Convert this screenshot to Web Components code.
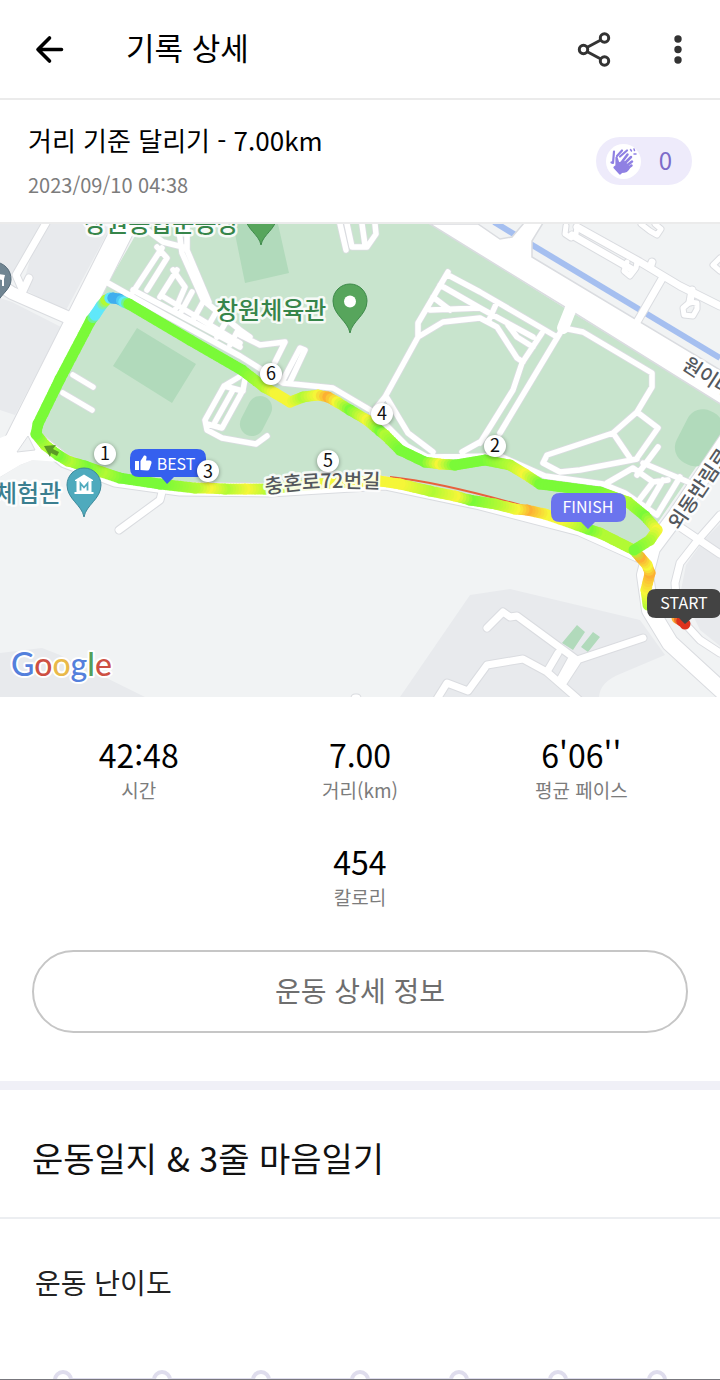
<!DOCTYPE html>
<html lang="ko">
<head>
<meta charset="utf-8">
<meta name="viewport" content="width=device-width, initial-scale=1">
<title>기록 상세</title>
<style>
  body {
    margin: 0;
    background: #fff;
    color: #111;
    font-family: "Noto Sans CJK KR", "Noto Sans", sans-serif;
  }
</style>
</head>
<body>

<record-page>
  <record-header slot="header">기록 상세</record-header>
  <record-info date="2023/09/10 04:38" claps="0">거리 기준 달리기 - 7.00km</record-info>
  <route-map></route-map>
  <record-stats>
    <stat-item value="42:48">시간</stat-item>
    <stat-item value="7.00">거리(km)</stat-item>
    <stat-item value="6'06''">평균 페이스</stat-item>
    <stat-item value="454">칼로리</stat-item>
  </record-stats>
  <detail-button>운동 상세 정보</detail-button>
  <diary-section heading="운동일지 &amp; 3줄 마음일기">
    <level-picker label="운동 난이도" steps="7"></level-picker>
  </diary-section>
</record-page>

<script>
//============= PAGE =========================//
const RecordPage = document.createElement('template');
RecordPage.innerHTML = `
<style>
  :host { display: block; }
  main { display: flex; flex-direction: column; }
</style>
<slot name="header"></slot>
<main><slot></slot></main>
`;

class recordpage extends HTMLElement {
  constructor() {
    super();
    this.attachShadow({ mode: 'open' });
    this.shadowRoot.appendChild(RecordPage.content.cloneNode(true));
  }
}
window.customElements.define('record-page', recordpage);


//============= HEADER =========================//
const RecordHeader = document.createElement('template');
RecordHeader.innerHTML = `
<style>
  :host { display: block; border-bottom: 2px solid #ebebeb; }
  header {
    display: flex;
    align-items: center;
    height: 98px;
    padding: 0 20px;
  }
  h1 {
    flex: 1;
    margin: 0 0 4px 50px;
    font-size: 31px;
    line-height: 48px;
    font-weight: 400;
    color: #000;
  }
  button {
    width: 56px;
    height: 56px;
    padding: 0;
    border: 0;
    background: none;
  }
  .share { margin-right: 22px; }
  svg { display: block; }
</style>
<header>
  <button type="button" aria-label="뒤로">
    <svg width="56" height="56" viewBox="0 0 56 56" fill="none" stroke="#000" stroke-width="3.6" stroke-linecap="round" stroke-linejoin="round"><path d="M41.500 28.500H18M29.500 17L18 28.500 29.500 40"/></svg>
  </button>
  <h1><slot></slot></h1>
  <button class="share" type="button" aria-label="공유">
    <svg width="56" height="56" viewBox="0 0 56 56" fill="none" stroke="#333" stroke-width="3"><circle cx="17.500" cy="28.500" r="4.200"/><circle cx="38.500" cy="17" r="4.200"/><circle cx="38.500" cy="40" r="4.200"/><path d="M21.300 26.300L34.800 19M21.300 30.700L34.800 38"/></svg>
  </button>
  <button class="more" type="button" aria-label="더보기">
    <svg width="56" height="56" viewBox="0 0 56 56" fill="#333"><circle cx="34" cy="18" r="3.700"/><circle cx="34" cy="28.500" r="3.700"/><circle cx="34" cy="39" r="3.700"/></svg>
  </button>
</header>
`;

class recordheader extends HTMLElement {
  constructor() {
    super();
    this.attachShadow({ mode: 'open' });
    this.shadowRoot.appendChild(RecordHeader.content.cloneNode(true));
  }
}
window.customElements.define('record-header', recordheader);


//============= RECORD INFO + CLAP =========================//
const RecordInfo = document.createElement('template');
RecordInfo.innerHTML = `
<style>
  :host {
    display: flex;
    align-items: center;
    justify-content: space-between;
    padding: 18px 28px 22px;
    border-bottom: 2px solid #ebebeb;
  }
  h2 {
    margin: 0;
    font-size: 26px;
    line-height: 44px;
    font-weight: 400;
    color: #000;
  }
  time {
    display: block;
    margin-top: 8px;
    font-size: 20px;
    line-height: 30px;
    color: #7c7c7c;
  }
  button {
    display: flex;
    align-items: center;
    gap: 18px;
    height: 48px;
    margin-top: 4px;
    padding: 0 20px 0 10px;
    border: 0;
    border-radius: 24px;
    background: #eeebfb;
    color: #7c6bc9;
    font: inherit;
    font-size: 24px;
    line-height: 36px;
  }
  span { padding-bottom: 3px; }
</style>
<div>
  <h2><slot></slot></h2>
  <time></time>
</div>
<button type="button" aria-label="박수">
  <svg width="35" height="35" viewBox="0 0 35 35">
    <circle cx="17.500" cy="17.500" r="17.500" fill="#fff"/>
    <g stroke="#8f80e3" stroke-width="2.200" stroke-linecap="round" stroke-linejoin="round" fill="#8f80e3">
      <path d="M8 7.500L7 19L5.500 18.500M11 12L16 6.500M14 12.500L21 6.500" fill="none"/>
      <path d="M10.500 13.500V22L8.500 23.500L14 29.500L15.500 28C20 28 22 26 23 23.500L18 18L12.500 19.500Z"/>
      <path d="M14 20.500L21.500 10.500M16.500 21.500L25 13M19 23L26 17.500M20 25.500L25.500 21.500" fill="none" stroke-width="2.500"/>
      <path d="M24.500 5.500L25.500 7M28 5L28.500 6.500M28 10L30 10" stroke-width="1.500"/>
    </g>
  </svg>
  <span></span>
</button>
`;

class recordinfo extends HTMLElement {
  constructor() {
    super();
    this.attachShadow({ mode: 'open' });
    this.shadowRoot.appendChild(RecordInfo.content.cloneNode(true));
    this.shadowRoot.querySelector('time').innerText = this.getAttribute('date');
    this.shadowRoot.querySelector('span').innerText = this.getAttribute('claps');
  }
}
window.customElements.define('record-info', recordinfo);


//============= ROUTE MAP =========================//
const RouteMap = document.createElement('template');
RouteMap.innerHTML = `
<style>
  :host { display: block; }
  svg { display: block; width: 100%; height: auto; }
  .case { fill: none; stroke: #dadce0; stroke-linejoin: round; stroke-linecap: round; }
  .road { fill: none; stroke: #fff; stroke-linejoin: round; stroke-linecap: round; }
  .block { fill: #e8eaed; }
  .field { fill: #b1dabb; }
  .label {
    font-size: 24px;
    font-weight: 500;
    paint-order: stroke;
    stroke: #fff;
    stroke-opacity: .85;
    stroke-width: 5px;
    stroke-linejoin: round;
  }
  .place { fill: #36854a; }
  .museum { fill: #3b7f90; }
  .street { fill: #54585d; font-size: 20px; }
  .km circle { fill: #fff; filter: drop-shadow(0 1px 2px rgba(0, 0, 0, .4)); }
  .km text { font-size: 18px; text-anchor: middle; fill: #111; }
  .tag { font-size: 16px; fill: #fff; text-anchor: middle; }
  .google {
    font: 500 32px Lato, sans-serif;
    paint-order: stroke;
    stroke: #fff;
    stroke-width: 4px;
    stroke-linejoin: round;
  }
</style>
<svg viewBox="0 224 720 473" role="img" aria-label="달리기 경로 지도">
  <defs>
    <path id="r-west" d="M130 215L14 445"/>
    <path id="r-south" d="M36 438L65 461L115 480L180 489L270 490L385 483L480 503L580 529L640 556"/>
    <path id="r-east" d="M735 428L676 516L652 548L645 575L650 610L670 643L730 698"/>
    <path id="r-town" d="M46 223L16 275L23 291L29 278M577 227L640 262L680 286L720 306M572 235L633 270M663 277L637 322M692 290L690 302M652 262L650 268
      M680 527L720 554M720 515L698 540L680 563L675 583L677 610L688 627L700 640L720 653
      M487 628L503 612L510 617L517 616L577 660L643 638M437 699L447 683L468 691L487 665L523 659L547 672L579 700M558 653L548 670M578 660L563 683M571 660L560 680
      M163 488L160 500L119 530M355 698L357 698"/>
    <path id="r-ring" d="M566 226L565 234L571 238L576 234L577 227M627 262L624 271L630 276L636 268L637 262M690 302L683 308L684 315L693 316L697 309L697 303ZM641 224L650 231L657 235L661 229L655 224M720 258L713 265L720 271"/>
    <path id="r-park" d="M108 283L165 315L240 356L283 383L333 388L372 411L407 446L427 457L500 456L545 476L603 484L625 493L657 515
      M133 290L240 347M240 335L260 345L285 342L275 362
      M162 248L133 292M157 247L167 258L147 290M143 227L163 242L187 248M178 223L182 253L203 300L240 330L250 337
      M187 223L187 250L209 302M177 270L160 297M173 270L185 287L176 308M192 292L181 312M203 302L193 320M215 314L207 328M226 322L217 337M237 332L230 345M162 296L240 343
      M73 375L93 387M63 393L92 410
      M239 377L224 386L205 420L207 430L222 438L256 444L267 436M243 390L222 428L207 424M233 390L215 422M224 386L243 391M246 374L243 390
      M283 380L300 348L305 350L290 382
      M340 224L346 250M347 224L352 247L367 247L376 234L375 224M362 224L365 245
      M448 272L418 323L418 337L385 397L372 413M418 337L443 322L480 318L497 327L517 358L523 362
      M448 275L480 292L557 337M440 285L480 308L533 337M433 297L450 310M430 310L480 308M497 302L489 320M508 325L517 337L533 347
      M542 333L522 363L513 390L480 443M560 333L500 433
      M563 328L583 332L652 373L652 387L637 412L613 433L547 455L543 463L560 472L580 470L637 459M637 412L658 428L637 458M613 433L630 458
      M658 447L637 475M607 483L633 468L653 482L640 499M643 463L693 484M680 477L657 515M663 480L647 507M653 482L668 480
      M387 398L408 433L433 452M462 452L480 442"/>
  </defs>

  <rect y="224" width="720" height="473" fill="#f1f3f4"/>
  <path class="block" d="M0 224H112L65 312L22 288L40 224ZM0 224H42L14 275L0 270ZM0 298L12 302L61 327L15 415L0 410ZM0 653L42 648L60 655L145 697H0ZM400 697L470 595L510 589L640 620L665 655L620 674Q600 682 599 697ZM720 524L704 540L686 565L681 590L700 630L720 646Z"/>
  <path fill="#c8e4cd" d="M142 224L108 283L34 430L50 448L110 475L200 488L260 488L390 480L530 508L600 528L640 548L663 515L725 425V405L568 310L480 255L430 224Z"/>
  <path class="field" d="M137 328L196 364L172 403L113 366ZM233 224H278L289 273L245 283ZM577 625L585 632L573 650L562 643ZM593 632L600 637L588 652L581 647Z"/>
  <rect class="field" x="244" y="395" width="24" height="42" rx="12" transform="rotate(27 256 416)"/>
  <rect class="field" x="681" y="409" width="38" height="58" rx="17" transform="rotate(27 700 436)"/>
  <path d="M494 222L720 358" stroke="#a5bff0" stroke-width="6" fill="none"/>

  <use href="#r-town" class="case" stroke-width="9"/>
  <use href="#r-ring" class="case" stroke-width="7"/>
  <use href="#r-park" class="case" stroke-width="7"/>
  <path class="case" stroke-width="14" d="M-5 282L12 293L76 321"/>
  <path class="case" stroke-width="16" d="M-5 471L16 458L36 450"/>
  <use href="#r-west" class="case" stroke-width="24"/>
  <use href="#r-south" class="case" stroke-width="15"/>
  <use href="#r-east" class="case" stroke-width="18"/>

  <path d="M430 224L480 255L568 309L722 405V371L532 257V241L543 223H524L512 237L500 239L478 224Z" fill="#fff" stroke="#dadce0" stroke-width="1.500"/>
  <path d="M571 308L563 328" class="road" stroke-width="12"/>
  <use href="#r-park" class="road" stroke-width="5.500"/>
  <use href="#r-town" class="road" stroke-width="7"/>
  <use href="#r-ring" class="road" stroke-width="5"/>
  <path class="road" stroke-width="12" d="M-5 282L12 293L76 321"/>
  <path fill="#fff" d="M-5 440L20 430L40 440L60 462L33 460L20 465L-5 480Z"/>
  <use href="#r-west" class="road" stroke-width="22"/>
  <use href="#r-south" class="road" stroke-width="13"/>
  <use href="#r-east" class="road" stroke-width="16"/>
  <path fill="#f1f3f4" stroke="#dadce0" d="M28 436L17 452L35 450Z"/>

  <path d="M390 477Q440 482 527 507" fill="none" stroke="#e8603c" stroke-width="2"/>
  <g id="track"></g>
  <path fill="#5b9a26" d="M44 446L56 445L53 449L59 452L57 456L51 453L50 457Z"/>

  <text class="label place" x="84" y="232">창원종합운동장</text>
  <text class="label place" x="216" y="319">창원체육관</text>
  <text class="label museum" x="-5" y="502">체험관</text>
  <path id="street-line" d="M266 494Q320 485 390 489" fill="none"/>
  <text class="label street"><textPath href="#street-line">충혼로72번길</textPath></text>
  <text class="label street" transform="translate(681 368) rotate(33)">원이대로</text>
  <text class="label street" transform="translate(679 531) rotate(-56)">외동반림로</text>

  <g fill="#57a55c" stroke="#3f8a4b">
    <path d="M350 333C348 321 333 315 333 301A17 17 0 0 1 367 301C367 315 352 321 350 333Z"/>
    <path d="M261 245C259 234 246 230 244 214H278C276 230 263 234 261 245Z"/>
  </g>
  <circle cx="350" cy="301.500" r="6" fill="#fff"/>
  <path d="M84 517C82 505 67 499 67 485A17 17 0 0 1 101 485C101 499 86 505 84 517Z" fill="#4eaabd" stroke="#3c899a"/>
  <path d="M75 481V480L84 474.500L93 480V481H91.500V492H93.500V494H74.500V492H76.500V481Z" fill="#fff"/>
  <path d="M80.500 490.500V483.500L84 487.500L87.500 483.500V490.500" fill="none" stroke="#4eaabd" stroke-width="1.800"/>
  <path d="M-6 262A17 17 0 0 1 11 280C11 290 -2 296 -4 306Z" fill="#708592" stroke="#566b79"/>
  <path d="M-2 274L5 275L4 279V286H2V280L-2 279Z" fill="#fff"/>

  <g class="km" id="km"></g>

  <path fill="#3560ee" d="M139 449H197Q206 449 206 458V468Q206 477 197 477H174L167 484L161 477H139Q130 477 130 468V458Q130 449 139 449Z"/>
  <path fill="#fff" d="M135 461H139V470H135ZM140.500 470V461L144 455.500Q147 455 146.500 458L146 460.500H150Q152 461 151.500 463L149.500 469Q149 470.500 147 470.500Z"/>
  <text class="tag" x="176" y="470">BEST</text>
  <g class="km"><circle cx="208" cy="471" r="11"/><text x="208" y="478">3</text></g>

  <path fill="#6b74ee" d="M560 493H617Q626 493 626 502V513Q626 522 617 522H595L588 529L581 522H560Q551 522 551 513V502Q551 493 560 493Z"/>
  <text class="tag" x="588" y="513">FINISH</text>
  <path fill="#434343" d="M656 589H712Q721 589 721 598V609Q721 618 712 618H692L685 624L679 618H656Q647 618 647 609V598Q647 589 656 589Z"/>
  <text class="tag" x="684" y="609">START</text>

  <text class="google" x="11" y="676"><tspan fill="#5480dc">G</tspan><tspan fill="#cd5043">o</tspan><tspan fill="#e9b94a">o</tspan><tspan fill="#5480dc">g</tspan><tspan fill="#54a058">l</tspan><tspan fill="#cd5043">e</tspan></text>
</svg>
`;

// pace colours, slow to fast
const PACE = {
  r: [222, 50, 30],
  o: [252, 176, 52],
  y: [245, 246, 56],
  l: [178, 250, 52],
  g: [122, 250, 56],
  c: [96, 232, 250],
  b: [64, 174, 238]
};

// x, y, pace
const TRACK = [
  [677, 618, 'o'], [682, 621, 'r'], [685, 624, 'r'], null,
  [648, 605, 'l'], [646, 590, 'y'], [650, 573, 'o'], [647, 565, 'y'], [640, 557, 'o'], [634, 550, 'l'], [600, 533, 'l'],
  [588, 529, 'g'], [577, 525, 'l'], [560, 519, 'y'], [545, 514, 'y'], [527, 510, 'o'], [515, 509, 'y'], [495, 504, 'l'], [470, 500, 'g'], [455, 496, 'y'],
  [430, 491, 'l'], [400, 484, 'y'], [380, 481, 'y'], [330, 483, 'y'], [265, 489, 'l'], [245, 489, 'y'], [225, 489, 'l'],
  [208, 488, 'y'], [195, 488, 'l'], [160, 484, 'g'], [120, 478, 'g'], [102, 472, 'l'], [85, 466, 'g'], [68, 461, 'l'], [58, 455, 'g'],
  [45, 445, 'l'], [36, 434, 'g'], [38, 424, 'g'], [60, 379, 'g'], [91, 320, 'g'], [95, 315, 'c'], [101, 306, 'c'], [106, 300, 'l'],
  [110, 298, 'c'], [113, 298, 'b'], [119, 299, 'b'], [124, 302, 'c'], [129, 304, 'g'], [190, 340, 'g'], [242, 370, 'g'], [264, 387, 'l'],
  [275, 393, 'y'], [290, 402, 'y'], [303, 397, 'l'], [318, 395, 'y'], [328, 397, 'o'], [337, 402, 'y'], [350, 410, 'g'],
  [367, 420, 'y'], [380, 431, 'g'], [385, 435, 'l'], [400, 450, 'g'], [425, 462, 'g'], [440, 464, 'y'], [455, 465, 'g'], [485, 460, 'g'],
  [510, 465, 'l'], [525, 474, 'y'], [540, 484, 'g'], [600, 492, 'g'], [628, 502, 'l'], [645, 516, 'g'], [657, 530, 'y'],
  [650, 540, 'l'], [634, 550, 'g']
];

const KM = [[1, 105, 454], [2, 495, 446], [4, 382, 414], [5, 328, 461], [6, 271, 374]];

class routemap extends HTMLElement {
  constructor() {
    super();
    this.attachShadow({ mode: 'open' });
    this.shadowRoot.appendChild(RouteMap.content.cloneNode(true));
  }

  connectedCallback() {
    this.render();
  }

  render() {
    let dots = '';
    for (let i = 1; i < TRACK.length; i++) {
      const a = TRACK[i - 1];
      const b = TRACK[i];
      if (!a || !b) continue;
      const steps = Math.max(1, Math.round(Math.hypot(b[0] - a[0], b[1] - a[1]) / 3));
      for (let s = 0; s <= steps; s++) {
        const t = s / steps;
        const mix = (m, n) => m + (n - m) * t;
        const rgb = PACE[a[2]].map((v, k) => Math.round(mix(v, PACE[b[2]][k])));
        dots += `<circle cx="${mix(a[0], b[0])}" cy="${mix(a[1], b[1])}" r="5.5" fill="rgb(${rgb})"/>`;
      }
    }
    this.shadowRoot.querySelector('#track').innerHTML = dots;
    this.shadowRoot.querySelector('#km').innerHTML = KM.map(([n, x, y]) =>
      `<circle cx="${x}" cy="${y}" r="11"/><text x="${x}" y="${y + 6}">${n}</text>`).join('');
  }
}
window.customElements.define('route-map', routemap);


//============= STATS =========================//
const RecordStats = document.createElement('template');
RecordStats.innerHTML = `
<style>
  :host {
    display: flex;
    flex-wrap: wrap;
    justify-content: center;
    row-gap: 35px;
    padding: 35px 28px 39px;
  }
</style>
<slot></slot>
`;

class recordstats extends HTMLElement {
  constructor() {
    super();
    this.attachShadow({ mode: 'open' });
    this.shadowRoot.appendChild(RecordStats.content.cloneNode(true));
  }
}
window.customElements.define('record-stats', recordstats);

const StatItem = document.createElement('template');
StatItem.innerHTML = `
<style>
  :host { display: block; flex: 0 0 calc(100% / 3); text-align: center; }
  .value { font-size: 32px; line-height: 44px; color: #000; }
  .name { font-size: 19px; line-height: 28px; color: #7c7c7c; }
</style>
<div class="value"></div>
<div class="name"><slot></slot></div>
`;

class statitem extends HTMLElement {
  constructor() {
    super();
    this.attachShadow({ mode: 'open' });
    this.shadowRoot.appendChild(StatItem.content.cloneNode(true));
    this.shadowRoot.querySelector('.value').innerText = this.getAttribute('value');
  }
}
window.customElements.define('stat-item', statitem);


//============= DETAIL BUTTON =========================//
const DetailButton = document.createElement('template');
DetailButton.innerHTML = `
<style>
  :host { display: block; padding: 0 32px 48px; }
  button {
    display: block;
    width: 100%;
    height: 83px;
    padding: 0 0 4px;
    border: 2px solid #c6c6c6;
    border-radius: 42px;
    background: #fff;
    color: #6e6e6e;
    font: inherit;
    font-size: 28px;
    line-height: 40px;
  }
</style>
<button type="button"><slot></slot></button>
`;

class detailbutton extends HTMLElement {
  constructor() {
    super();
    this.attachShadow({ mode: 'open' });
    this.shadowRoot.appendChild(DetailButton.content.cloneNode(true));
  }
}
window.customElements.define('detail-button', detailbutton);


//============= DIARY =========================//
const DiarySection = document.createElement('template');
DiarySection.innerHTML = `
<style>
  :host { display: block; border-top: 9px solid #f0f0f7; }
  h2 {
    margin: 0;
    padding: 42px 32px 33px;
    border-bottom: 2px solid #eceef1;
    font-size: 34px;
    line-height: 52px;
    font-weight: 400;
    color: #111;
  }
</style>
<section>
  <h2></h2>
  <slot></slot>
</section>
`;

class diarysection extends HTMLElement {
  constructor() {
    super();
    this.attachShadow({ mode: 'open' });
    this.shadowRoot.appendChild(DiarySection.content.cloneNode(true));
    this.shadowRoot.querySelector('h2').innerText = this.getAttribute('heading');
  }
}
window.customElements.define('diary-section', diarysection);

const LevelPicker = document.createElement('template');
LevelPicker.innerHTML = `
<style>
  :host { display: block; }
  fieldset { margin: 0; padding: 0; border: 0; min-width: 0; }
  legend {
    padding: 43px 35px 68px;
    font-size: 28px;
    line-height: 40px;
    color: #222;
  }
  .scale {
    display: flex;
    justify-content: space-between;
    height: 9px;
    padding: 0 53px;
    overflow: hidden;
    border-bottom: 1px solid #77767c;
    background: linear-gradient(#dfdded, #dfdded) 63px 8px / calc(100% - 126px) 4px no-repeat;
  }
  input {
    appearance: none;
    box-sizing: border-box;
    flex: none;
    width: 20px;
    height: 20px;
    margin: 0;
    border: 4px solid #dfdded;
    border-radius: 50%;
    background: #fff;
  }
</style>
<fieldset>
  <legend></legend>
  <div class="scale"></div>
</fieldset>
`;

class levelpicker extends HTMLElement {
  constructor() {
    super();
    this.attachShadow({ mode: 'open' });
    this.shadowRoot.appendChild(LevelPicker.content.cloneNode(true));
  }

  connectedCallback() {
    this.render();
  }

  render() {
    const label = this.getAttribute('label');
    let steps = '';
    for (let i = 1; i <= Number(this.getAttribute('steps')); i++) {
      steps += `<input type="radio" name="level" value="${i}" aria-label="${label} ${i}">`;
    }
    this.shadowRoot.querySelector('legend').innerText = label;
    this.shadowRoot.querySelector('.scale').innerHTML = steps;
  }
}
window.customElements.define('level-picker', levelpicker);
</script>
</body>
</html>
